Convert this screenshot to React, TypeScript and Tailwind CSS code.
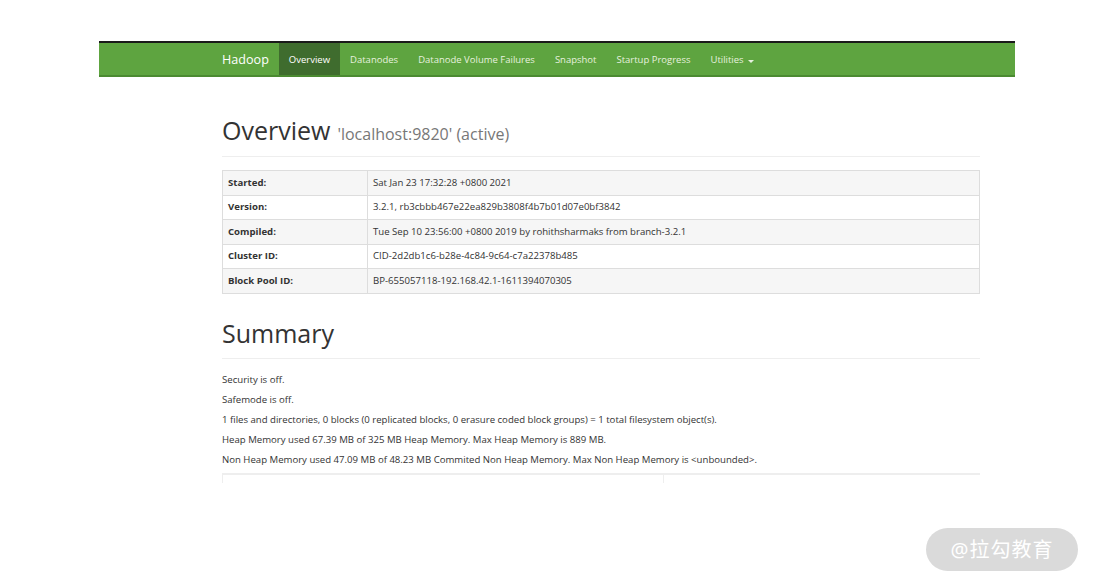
const rows: [string, string][] = [
  ["Started:", "Sat Jan 23 17:32:28 +0800 2021"],
  ["Version:", "3.2.1, rb3cbbb467e22ea829b3808f4b7b01d07e0bf3842"],
  ["Compiled:", "Tue Sep 10 23:56:00 +0800 2019 by rohithsharmaks from branch-3.2.1"],
  ["Cluster ID:", "CID-2d2db1c6-b28e-4c84-9c64-c7a22378b485"],
  ["Block Pool ID:", "BP-655057118-192.168.42.1-1611394070305"],
];

const summary = [
  "Security is off.",
  "Safemode is off.",
  "1 files and directories, 0 blocks (0 replicated blocks, 0 erasure coded block groups) = 1 total filesystem object(s).",
  "Heap Memory used 67.39 MB of 325 MB Heap Memory. Max Heap Memory is 889 MB.",
  "Non Heap Memory used 47.09 MB of 48.23 MB Commited Non Heap Memory. Max Non Heap Memory is <unbounded>.",
];

const navItems = ["Datanodes", "Datanode Volume Failures", "Snapshot", "Startup Progress"];

export default function App() {
  return (
    <div
      className="h-[585px] w-[1094px] overflow-hidden bg-white text-[#333] relative"
      style={{ fontFamily: '"Open Sans", "Noto Sans", sans-serif' }}
    >
      <div className="pt-[41px] px-[99px] w-[1015px] box-content">
        {/* Navbar */}
        <div className="w-[916px] h-[36px] border-t-2 border-[#1a1a1a] border-b-2 border-b-[#4b8a31] bg-[#5ea440] flex items-stretch pl-[123px]">
          <div className="flex items-center pt-[3px] text-white text-[12.6px] pr-[10px]">Hadoop</div>
          <div className="flex items-center pt-[3px] px-[10px] bg-[#3f6c2e] text-white text-[9.5px]">Overview</div>
          {navItems.map((n) => (
            <div key={n} className="flex items-center pt-[3px] px-[10px] text-[#e6f1df] text-[9.5px]">
              {n}
            </div>
          ))}
          <div className="flex items-center pt-[3px] px-[10px] text-[#e6f1df] text-[9.5px] gap-[4px]">
            Utilities
            <span className="w-0 h-0 border-l-[3px] border-r-[3px] border-t-[3px] border-l-transparent border-r-transparent border-t-[#e6f1df] mt-[1px]" />
          </div>
        </div>

        {/* Content */}
        <div className="ml-[123px] w-[758px]">
          <div className="mt-[38px] pb-[10px] border-b border-[#eee] flex items-baseline gap-[7px]">
            <span className="text-[25px] leading-[30px]">Overview</span>
            <span className="text-[16px] text-[#777]">'localhost:9820' (active)</span>
          </div>

          <table className="mt-[13px] w-full border border-[#ddd] border-collapse text-[9.6px]">
            <tbody>
              {rows.map(([k, v], i) => (
                <tr key={k} className={i % 2 === 0 ? "bg-[#f6f6f6]" : "bg-white"}>
                  <td className="w-[145px] h-[24.6px] px-[5px] border border-[#ddd] font-bold">{k}</td>
                  <td className="px-[5px] border border-[#ddd]">{v}</td>
                </tr>
              ))}
            </tbody>
          </table>

          <div className="mt-[24px] pb-[9px] border-b border-[#eee]">
            <span className="text-[25px] leading-[30px]">Summary</span>
          </div>

          <div className="mt-[11px] flex flex-col text-[9.6px]">
            {summary.map((s) => (
              <div key={s} className="h-[20px] leading-[20px]">
                {s}
              </div>
            ))}
          </div>

          <div className="mt-[3px] h-[10px] border-t-2 border-[#eee] border-l border-l-[#eee] flex">
            <div className="w-[441px] border-r border-[#eee]" />
          </div>
        </div>
      </div>

      {/* Watermark */}
      <div
        className="absolute left-[926px] top-[528px] w-[152px] h-[43px] rounded-full bg-[#dadada] flex items-center justify-center text-white text-[20px] tracking-[1px]"
        style={{ fontFamily: '"Noto Sans", "Noto Sans CJK SC", sans-serif' }}
      >
        @拉勾教育
      </div>
    </div>
  );
}
